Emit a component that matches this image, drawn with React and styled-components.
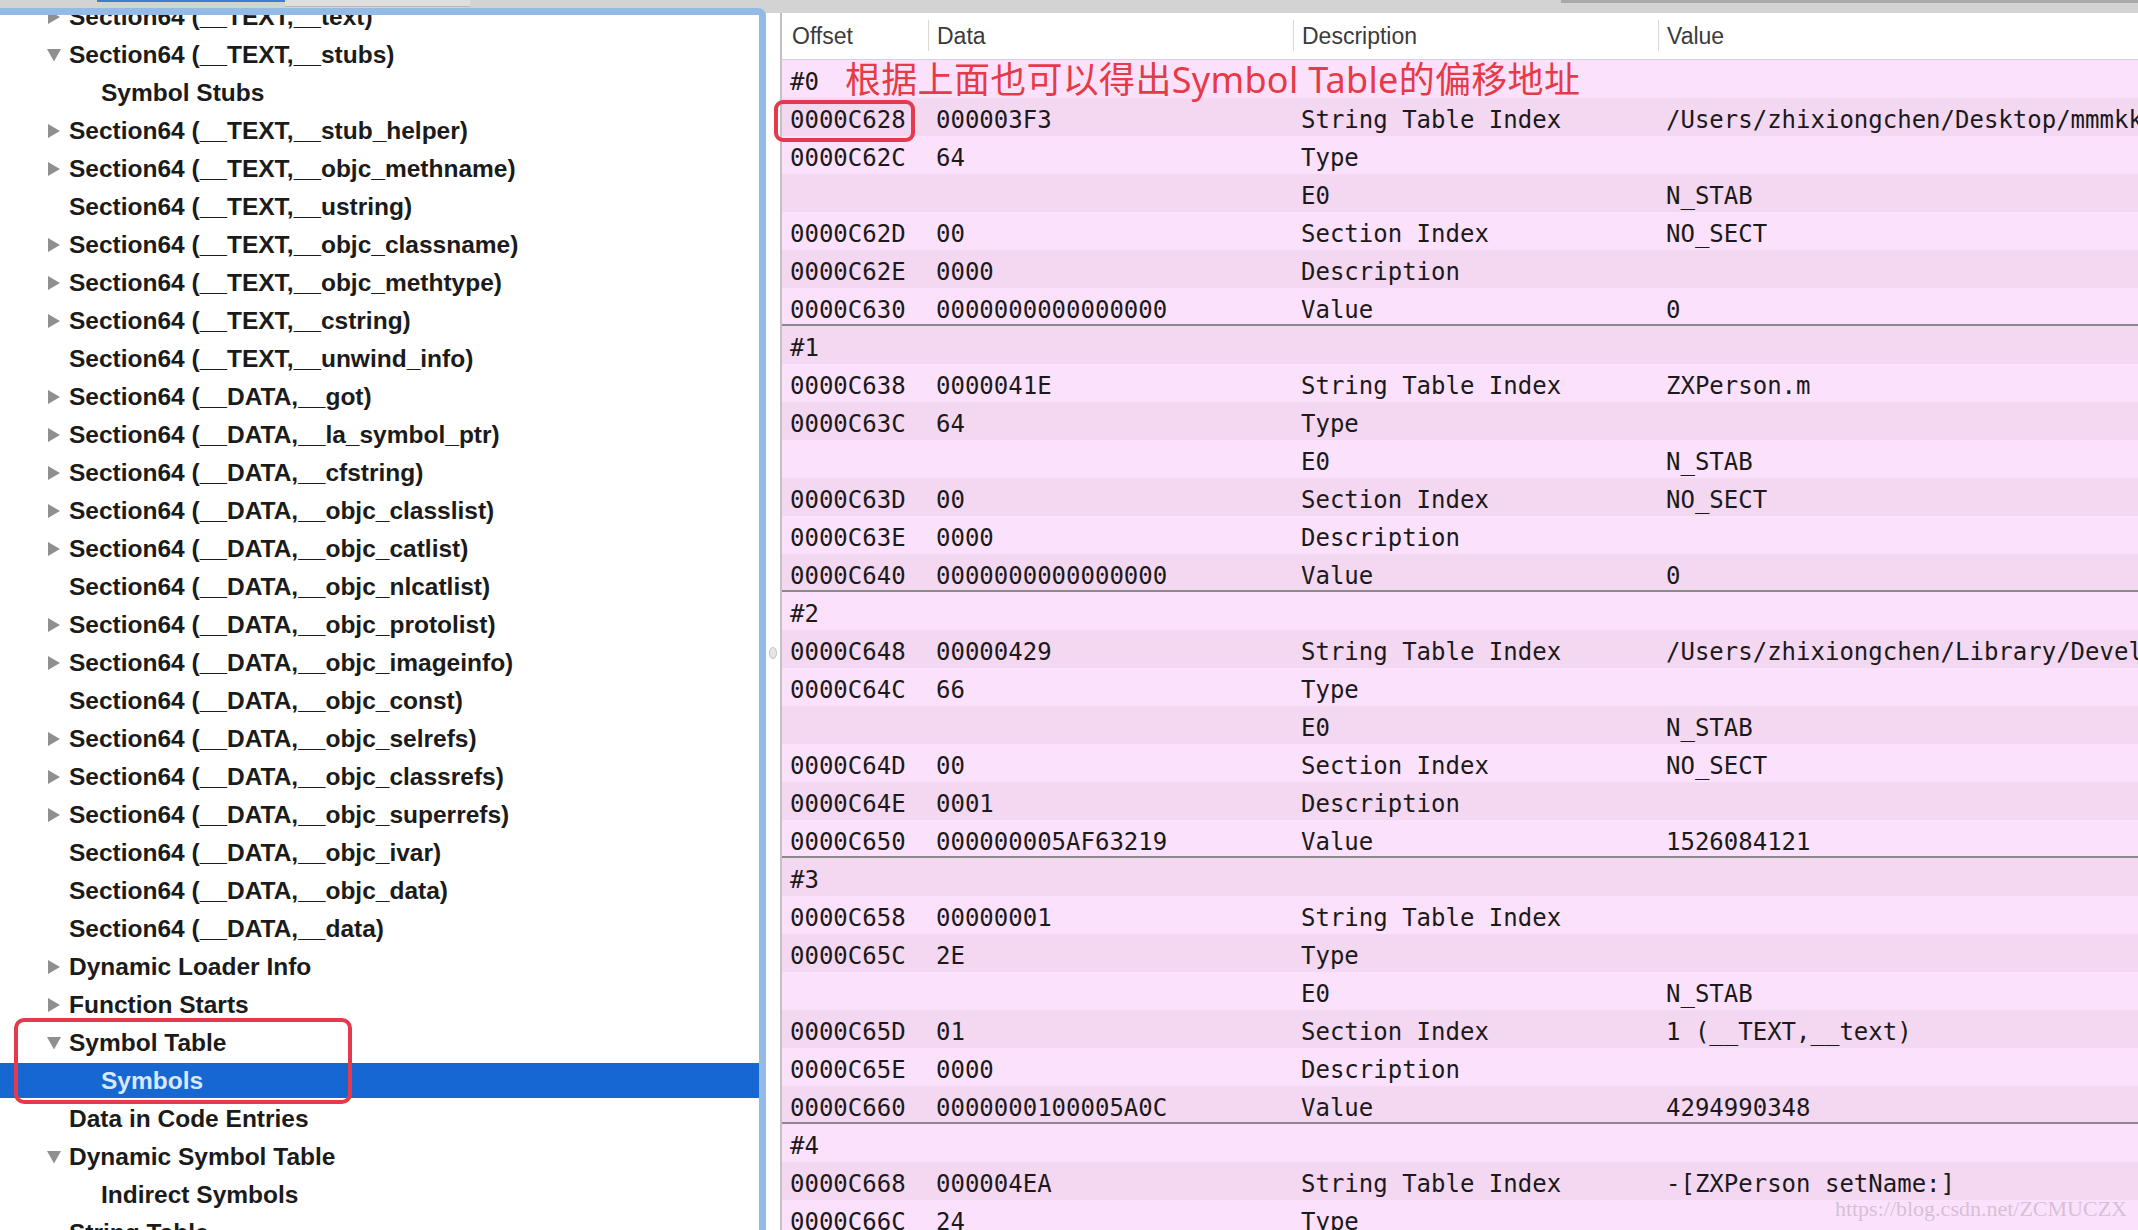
import React from 'react';
import styled, { createGlobalStyle } from 'styled-components';

const GlobalStyle = createGlobalStyle`
  html, body { margin: 0; padding: 0; background: #fff; }
  body { width: 2138px; height: 1230px; overflow: hidden; }
  #root { width: 2138px; height: 1230px; }
  *, *::before, *::after { box-sizing: border-box; }
`;

const Page = styled.div`
  position: relative;
  width: 2138px;
  height: 1230px;
  overflow: hidden;
  display: flex;
  flex-direction: column;
  background: #d3d3d3;
  font-family: "Liberation Sans", Arial, sans-serif;
`;

const TopStrip = styled.div`
  flex: none;
  height: 8px;
  display: flex;
  align-items: flex-start;
  padding-left: 97px;
`;

const SegActive = styled.div`
  width: 188px;
  height: 7px;
  border-top: 2px solid #3d7bd9;
`;

const SegPlain = styled.div`
  width: 185px;
  height: 7px;
  background: #dedede;
  border-bottom: 1px solid #b7b7b7;
`;

const TopRightLine = styled.div`
  margin-left: auto;
  width: 577px;
  height: 3px;
  background: #a9a9a9;
`;

const Body = styled.div`
  flex: 1;
  min-height: 0;
  display: flex;
`;

const LeftPane = styled.div`
  flex: none;
  width: 766px;
  background: #fff;
  border-top: 7px solid #94bbe6;
  border-right: 7px solid #94bbe6;
  border-top-right-radius: 8px;
  overflow: hidden;
`;

const TreeList = styled.div`
  margin-top: -17px;
  display: flex;
  flex-direction: column;
`;

const TreeRow = styled.div`
  height: 38px;
  flex: none;
  display: flex;
  align-items: center;
  padding-left: ${(p) => 47 + p.$depth * 32}px;
  background: ${(p) =>
    p.$selected
      ? 'linear-gradient(transparent 1px, #1767d2 1px, #1767d2 36px, transparent 36px)'
      : 'transparent'};
  color: ${(p) => (p.$selected ? '#d8e8fd' : '#1b1b1b')};
`;

const ArrowSlot = styled.span`
  flex: none;
  width: 14px;
  height: 14px;
  margin-right: 8px;
  display: flex;
`;

const TreeLabel = styled.span`
  font-weight: 700;
  font-size: 24.5px;
  white-space: nowrap;
  line-height: 38px;
`;

const AnchorCell = styled.span`
  position: relative;
  display: flex;
  align-items: center;
`;

const LeftHighlight = styled.span`
  position: absolute;
  z-index: 3;
  left: -55px;
  top: -6px;
  width: 338px;
  height: 86px;
  border: 4px solid #e5394e;
  border-radius: 10px;
  pointer-events: none;
`;

const RightArea = styled.div`
  flex: 1;
  min-width: 0;
  margin-top: 5px;
  background: #fff;
  display: flex;
`;

const Divider = styled.div`
  flex: none;
  width: 14px;
  padding-top: 634px;
  display: flex;
  justify-content: center;
  align-items: flex-start;
`;

const DividerDot = styled.span`
  width: 8px;
  height: 12px;
  border-radius: 50%;
  background: #e6e6e6;
  border: 1px solid #c4c4c4;
`;

const Table = styled.div`
  flex: 1;
  min-width: 0;
  border-left: 2px solid #c2c2c2;
  display: flex;
  flex-direction: column;
`;

const cols = '146px 365px 365px minmax(0, 1fr)';

const HeaderRow = styled.div`
  flex: none;
  height: 47px;
  display: grid;
  grid-template-columns: ${cols};
  border-bottom: 1px solid #d4d4d4;
  background: #fff;
`;

const HeaderCell = styled.div`
  position: relative;
  display: flex;
  align-items: center;
  padding-left: ${(p) => (p.$first ? 10 : 9)}px;
  font-size: 23px;
  color: #3b3b3b;
  &::before {
    content: '';
    display: ${(p) => (p.$first ? 'none' : 'block')};
    position: absolute;
    left: 0;
    top: 7px;
    bottom: 8px;
    width: 1px;
    background: #dadada;
  }
`;

const DataRow = styled.div`
  position: relative;
  flex: none;
  height: 38px;
  display: grid;
  grid-template-columns: ${cols};
  background: ${(p) => (p.$odd ? '#f4d7f1' : '#fce1fc')};
  box-shadow: ${(p) => (p.$end ? 'inset 0 -2px 0 #8a8a8a' : 'none')};
  font-family: "DejaVu Sans Mono", "Liberation Mono", monospace;
  font-size: 24px;
  color: #1a1a1a;
`;

const DataCell = styled.div`
  padding-left: 8px;
  padding-top: 7px;
  line-height: 31px;
  white-space: nowrap;
  overflow: hidden;
`;

const Annotation = styled.span`
  position: absolute;
  z-index: 2;
  left: 63px;
  top: 1px;
  line-height: 38px;
  font-family: "Noto Sans", "Noto Sans CJK SC", sans-serif;
  font-size: 36px;
  letter-spacing: 0.3px;
  color: #e63a46;
  white-space: nowrap;
`;

const OffsetHighlight = styled.span`
  position: absolute;
  z-index: 2;
  left: -8px;
  top: 2px;
  width: 141px;
  height: 42px;
  border: 4px solid #e5394e;
  border-radius: 9px;
  pointer-events: none;
`;

const Watermark = styled.span`
  position: absolute;
  right: 11px;
  bottom: 8px;
  font-family: "Liberation Serif", "Times New Roman", serif;
  font-size: 22px;
  color: rgba(150, 140, 150, 0.4);
  white-space: nowrap;
`;

const Arrow = ({ dir }) => (
  <svg width="14" height="14" viewBox="0 0 14 14">
    {dir === 'down' ? (
      <polygon points="0,1 14,1 7,13.5" fill="#8f8f8f" />
    ) : (
      <polygon points="1,0 13,7 1,14" fill="#8f8f8f" />
    )}
  </svg>
);

const tree = [
  ['Section64 (__TEXT,__text)', 'right', 0],
  ['Section64 (__TEXT,__stubs)', 'down', 0],
  ['Symbol Stubs', null, 1],
  ['Section64 (__TEXT,__stub_helper)', 'right', 0],
  ['Section64 (__TEXT,__objc_methname)', 'right', 0],
  ['Section64 (__TEXT,__ustring)', null, 0],
  ['Section64 (__TEXT,__objc_classname)', 'right', 0],
  ['Section64 (__TEXT,__objc_methtype)', 'right', 0],
  ['Section64 (__TEXT,__cstring)', 'right', 0],
  ['Section64 (__TEXT,__unwind_info)', null, 0],
  ['Section64 (__DATA,__got)', 'right', 0],
  ['Section64 (__DATA,__la_symbol_ptr)', 'right', 0],
  ['Section64 (__DATA,__cfstring)', 'right', 0],
  ['Section64 (__DATA,__objc_classlist)', 'right', 0],
  ['Section64 (__DATA,__objc_catlist)', 'right', 0],
  ['Section64 (__DATA,__objc_nlcatlist)', null, 0],
  ['Section64 (__DATA,__objc_protolist)', 'right', 0],
  ['Section64 (__DATA,__objc_imageinfo)', 'right', 0],
  ['Section64 (__DATA,__objc_const)', null, 0],
  ['Section64 (__DATA,__objc_selrefs)', 'right', 0],
  ['Section64 (__DATA,__objc_classrefs)', 'right', 0],
  ['Section64 (__DATA,__objc_superrefs)', 'right', 0],
  ['Section64 (__DATA,__objc_ivar)', null, 0],
  ['Section64 (__DATA,__objc_data)', null, 0],
  ['Section64 (__DATA,__data)', null, 0],
  ['Dynamic Loader Info', 'right', 0],
  ['Function Starts', 'right', 0],
  ['Symbol Table', 'down', 0, 'box'],
  ['Symbols', null, 1, 'sel'],
  ['Data in Code Entries', null, 0],
  ['Dynamic Symbol Table', 'down', 0],
  ['Indirect Symbols', null, 1],
  ['String Table', null, 0],
];

const groups = [
  {
    id: '#0',
    rows: [
      ['0000C628', '000003F3', 'String Table Index', '/Users/zhixiongchen/Desktop/mmmkkk/ZXPerson.m'],
      ['0000C62C', '64', 'Type', ''],
      ['', '', 'E0', 'N_STAB'],
      ['0000C62D', '00', 'Section Index', 'NO_SECT'],
      ['0000C62E', '0000', 'Description', ''],
      ['0000C630', '0000000000000000', 'Value', '0'],
    ],
  },
  {
    id: '#1',
    rows: [
      ['0000C638', '0000041E', 'String Table Index', 'ZXPerson.m'],
      ['0000C63C', '64', 'Type', ''],
      ['', '', 'E0', 'N_STAB'],
      ['0000C63D', '00', 'Section Index', 'NO_SECT'],
      ['0000C63E', '0000', 'Description', ''],
      ['0000C640', '0000000000000000', 'Value', '0'],
    ],
  },
  {
    id: '#2',
    rows: [
      ['0000C648', '00000429', 'String Table Index', '/Users/zhixiongchen/Library/Developer/Xcode'],
      ['0000C64C', '66', 'Type', ''],
      ['', '', 'E0', 'N_STAB'],
      ['0000C64D', '00', 'Section Index', 'NO_SECT'],
      ['0000C64E', '0001', 'Description', ''],
      ['0000C650', '000000005AF63219', 'Value', '1526084121'],
    ],
  },
  {
    id: '#3',
    rows: [
      ['0000C658', '00000001', 'String Table Index', ''],
      ['0000C65C', '2E', 'Type', ''],
      ['', '', 'E0', 'N_STAB'],
      ['0000C65D', '01', 'Section Index', '1 (__TEXT,__text)'],
      ['0000C65E', '0000', 'Description', ''],
      ['0000C660', '0000000100005A0C', 'Value', '4294990348'],
    ],
  },
  {
    id: '#4',
    rows: [
      ['0000C668', '000004EA', 'String Table Index', '-[ZXPerson setName:]'],
      ['0000C66C', '24', 'Type', ''],
    ],
  },
];

function buildRows() {
  const out = [];
  groups.forEach((g, gi) => {
    out.push({ cells: [g.id, '', '', ''], end: false, head: gi === 0 });
    g.rows.forEach((r, ri) => {
      out.push({
        cells: r,
        end: ri === 5,
        mark: gi === 0 && ri === 0,
      });
    });
  });
  return out;
}

export default function App() {
  const rows = buildRows();
  return (
    <>
      <GlobalStyle />
      <Page>
        <TopStrip>
          <SegActive />
          <SegPlain />
          <TopRightLine />
        </TopStrip>
        <Body>
          <LeftPane>
            <TreeList>
              {tree.map(([label, arrow, depth, flag], i) => (
                <TreeRow key={i} $depth={depth} $selected={flag === 'sel'}>
                  <ArrowSlot>{arrow && <Arrow dir={arrow} />}</ArrowSlot>
                  {flag === 'box' ? (
                    <AnchorCell>
                      <LeftHighlight />
                      <TreeLabel>{label}</TreeLabel>
                    </AnchorCell>
                  ) : (
                    <TreeLabel>{label}</TreeLabel>
                  )}
                </TreeRow>
              ))}
            </TreeList>
          </LeftPane>
          <RightArea>
            <Divider>
              <DividerDot />
            </Divider>
            <Table>
              <HeaderRow>
                <HeaderCell $first>Offset</HeaderCell>
                <HeaderCell>Data</HeaderCell>
                <HeaderCell>Description</HeaderCell>
                <HeaderCell>Value</HeaderCell>
              </HeaderRow>
              {rows.map((r, i) => (
                <DataRow key={i} $odd={i % 2 === 1} $end={r.end}>
                  {r.head && <Annotation>根据上面也可以得出Symbol Table的偏移地址</Annotation>}
                  {r.mark && <OffsetHighlight />}
                  {r.cells.map((c, j) => (
                    <DataCell key={j}>{c}</DataCell>
                  ))}
                </DataRow>
              ))}
            </Table>
          </RightArea>
        </Body>
        <Watermark>https://blog.csdn.net/ZCMUCZX</Watermark>
      </Page>
    </>
  );
}
